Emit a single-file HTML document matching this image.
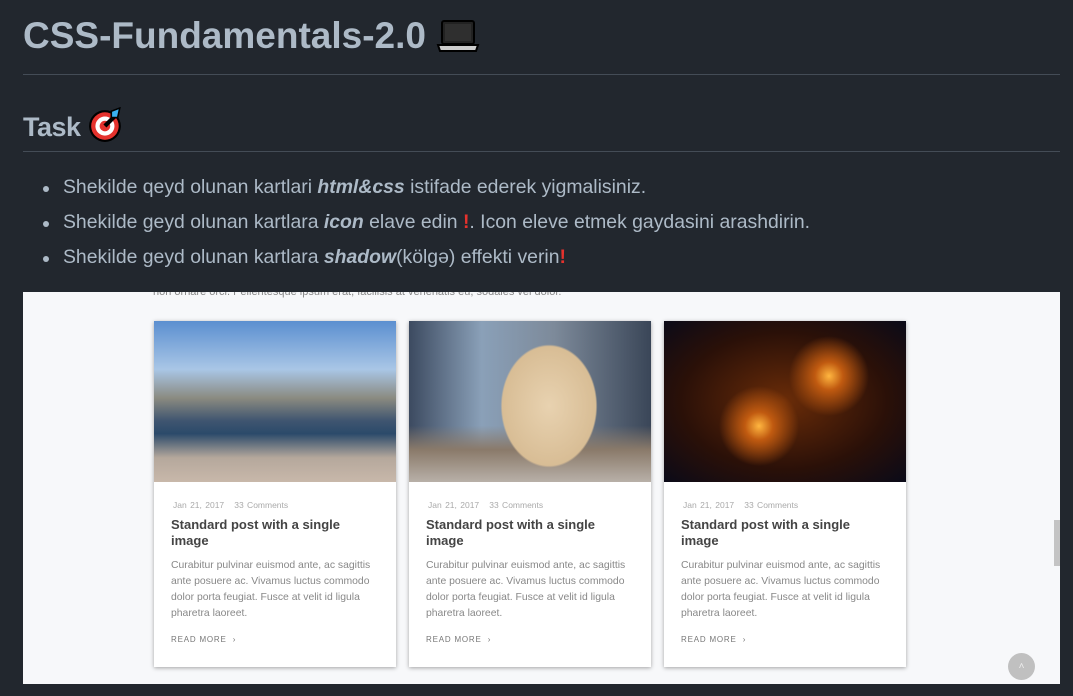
<!DOCTYPE html>
<html><head><meta charset="utf-8"><style>
*{margin:0;padding:0;box-sizing:border-box}
body{width:1073px;height:696px;background:#22272e;color:#adbac7;font-family:"Liberation Sans",sans-serif;overflow:hidden;position:relative}
h1{position:absolute;left:23px;top:15px;font-size:37px;font-weight:700;color:#adbac7;white-space:nowrap}
.hr{position:absolute;left:23px;width:1037px;height:1px;background:#444c56}
h2{position:absolute;left:23px;top:107px;font-size:27px;font-weight:700;white-space:nowrap;letter-spacing:-0.5px}
ul{position:absolute;left:63px;top:176px;list-style:none;font-size:19.4px}
li{height:35px;position:relative;white-space:nowrap}
li:before{content:"";position:absolute;left:-20px;top:10px;width:6px;height:6px;border-radius:50%;background:#adbac7}
b{font-style:italic;font-weight:700}
.ex{color:#e5322d;font-weight:700}
.shot{position:absolute;left:23px;top:292px;width:1037px;height:392px;background:#f7f8fa;overflow:hidden}
.top{position:absolute;left:130px;top:-6px;font-size:11px;color:#888;white-space:nowrap}
.card{position:absolute;top:29px;width:242px;height:346px;background:#fff;box-shadow:0 1px 4px rgba(0,0,0,.35)}
.img{height:161px}
.meta{position:absolute;left:19px;top:179px;font-size:8.5px;color:#aaa;word-spacing:1px}
.t{position:absolute;left:17px;top:196px;font-size:13px;font-weight:700;color:#444;line-height:16px;width:200px}
.p{position:absolute;left:17px;top:237px;font-size:10.4px;color:#888;line-height:16px;width:205px}
.rm{position:absolute;left:17px;top:314px;font-size:8px;color:#777;letter-spacing:.8px}
.sb{position:absolute;left:1031px;top:228px;width:6px;height:46px;background:#c4c4c4}
.up{position:absolute;left:985px;top:361px;width:27px;height:27px;border-radius:50%;background:#c0c0c0;color:#eee;font-size:10px;text-align:center;line-height:27px}
</style></head><body>
<h1>CSS-Fundamentals-2.0 <svg width="44" height="36" viewBox="0 0 44 36" style="vertical-align:-6px"><rect x="6" y="3" width="32" height="23" rx="2" fill="#222" stroke="#000" stroke-width="2"/><rect x="9" y="6" width="26" height="17" fill="#2f2f2f"/><path d="M2 27h40l-2 6H4z" fill="#ccc" stroke="#000" stroke-width="2"/></svg></h1>
<div class="hr" style="top:74px"></div>
<h2>Task <svg width="36" height="36" viewBox="0 0 34 34" style="vertical-align:-7px"><circle cx="16" cy="18" r="15" fill="#000"/><circle cx="16" cy="18" r="13" fill="#e5322d"/><circle cx="16" cy="18" r="9" fill="#fff"/><circle cx="16" cy="18" r="5" fill="#e5322d"/><path d="M16 18L28 6" stroke="#000" stroke-width="4"/><path d="M22 4l8-3-2 9-6 0z" fill="#3ab0f0" stroke="#000" stroke-width="1.5"/></svg></h2>
<div class="hr" style="top:151px"></div>
<ul>
<li>Shekilde qeyd olunan kartlari <b>html&amp;css</b> istifade ederek yigmalisiniz.</li>
<li>Shekilde geyd olunan kartlara <b>icon</b> elave edin <span class="ex">!</span>. Icon eleve etmek gaydasini arashdirin.</li>
<li>Shekilde geyd olunan kartlara <b>shadow</b>(kölgə) effekti verin<span class="ex">!</span></li>
</ul>
<div class="shot">
<div class="top">non ornare orci. Pellentesque ipsum erat, facilisis at venenatis eu, sodales vel dolor.</div>
<div class="card" style="left:131px"><div class="img" style="background:linear-gradient(180deg,#5b8fd0 0%,#a9c6e6 30%,#8a8a80 48%,#3f5570 62%,#2b4a6a 70%,#b5a89c 85%,#c8b8aa 100%)"></div>
<div class="meta">Jan 21, 2017 &nbsp; 33 Comments</div><div class="t">Standard post with a single image</div><div class="p">Curabitur pulvinar euismod ante, ac sagittis ante posuere ac. Vivamus luctus commodo dolor porta feugiat. Fusce at velit id ligula pharetra laoreet.</div><div class="rm">READ MORE &nbsp;›</div></div>
<div class="card" style="left:386px"><div class="img" style="background:radial-gradient(ellipse 55px 70px at 140px 85px,#e8d2b0 0,#d8bd95 85%,transparent 88%),linear-gradient(180deg,transparent 65%,#8a7a6a 80%,#b8b0a8 100%),linear-gradient(90deg,#3c4a60,#8aa0b8 30%,#7d8a9a 60%,#3a4658 100%)"></div>
<div class="meta">Jan 21, 2017 &nbsp; 33 Comments</div><div class="t">Standard post with a single image</div><div class="p">Curabitur pulvinar euismod ante, ac sagittis ante posuere ac. Vivamus luctus commodo dolor porta feugiat. Fusce at velit id ligula pharetra laoreet.</div><div class="rm">READ MORE &nbsp;›</div></div>
<div class="card" style="left:641px"><div class="img" style="background:radial-gradient(circle at 95px 105px,#ffb640 0,#c05a10 14px,transparent 40px),radial-gradient(circle at 165px 55px,#ffb640 0,#c05a10 14px,transparent 40px),radial-gradient(ellipse at 120px 80px,#6a2c08 0,#2a1008 60%,#0a0a18 100%)"></div>
<div class="meta">Jan 21, 2017 &nbsp; 33 Comments</div><div class="t">Standard post with a single image</div><div class="p">Curabitur pulvinar euismod ante, ac sagittis ante posuere ac. Vivamus luctus commodo dolor porta feugiat. Fusce at velit id ligula pharetra laoreet.</div><div class="rm">READ MORE &nbsp;›</div></div>
<div class="sb"></div><div class="up">˄</div>
</div>
</body></html>
